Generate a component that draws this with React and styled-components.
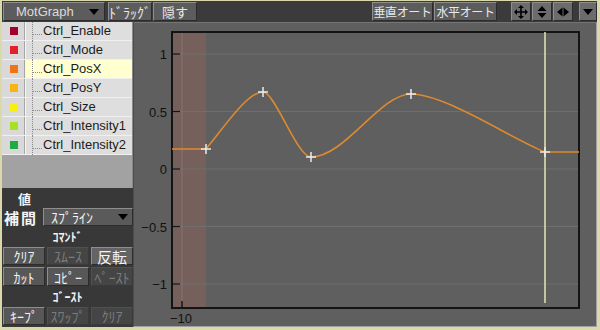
import { createGlobalStyle, styled } from 'styled-components';

const JP = `"Noto Sans CJK JP", "Liberation Sans", sans-serif`;
const SANS = `"Liberation Sans", Arial, sans-serif`;

const GlobalStyle = createGlobalStyle`
	html, body {
		margin: 0;
		padding: 0;
		background: #d9d9a9;
	}
	* {
		box-sizing: border-box;
	}
`;

const channels = [
	{ name: 'Ctrl_Enable', color: '#a3002e' },
	{ name: 'Ctrl_Mode', color: '#e4202a' },
	{ name: 'Ctrl_PosX', color: '#f07412', active: true },
	{ name: 'Ctrl_PosY', color: '#f8b414' },
	{ name: 'Ctrl_Size', color: '#f8ee10' },
	{ name: 'Ctrl_Intensity1', color: '#a8e022' },
	{ name: 'Ctrl_Intensity2', color: '#1eaa44' },
];

const keys = [
	[206, 149],
	[263, 92],
	[311, 157],
	[411, 94],
	[545, 152],
];

const yTicks = [
	{ y: 54, label: '1' },
	{ y: 111.5, label: '0.5' },
	{ y: 169, label: '0' },
	{ y: 226.5, label: '−0.5' },
	{ y: 284, label: '−1' },
];

const curve =
	'M172 149 L206 149 C228 122 248 92 263 92 C275 92 297 157 311 157 C345 157 380 94 411 94 C445 94 510 138 545 152 L579 152';

const MoveIcon = () => (
	<svg width='14' height='14' viewBox='0 0 14 14'>
		<path d='M7 2v10M2 7h10' stroke='#000' strokeWidth='1.6' />
		<path d='M7 0l3 3H4zM7 14l3-3H4zM0 7l3-3v6zM14 7l-3-3v6z' fill='#000' />
	</svg>
);

const UpDownIcon = () => (
	<svg width='10' height='14' viewBox='0 0 10 14'>
		<path d='M5 1l4.5 5h-9zM5 13l4.5-5h-9z' fill='#000' />
	</svg>
);

const LeftRightIcon = () => (
	<svg width='14' height='10' viewBox='0 0 14 10'>
		<path d='M1 5l5.5-4.5v9zM13 5l-5.5-4.5v9z' fill='#000' />
	</svg>
);

const Caret = () => (
	<svg width='10' height='6' viewBox='0 0 10 6'>
		<path d='M0 0h10L5 6z' fill='#000' />
	</svg>
);

const App = () => {
	return (
		<>
			<GlobalStyle />
			<Frame>
				<Toolbar>
					<Drop $w={102}>
						<span>MotGraph</span>
						<Caret />
					</Drop>
					<ToolBtn $w={44} $ml={3} $size={14}>
						ﾄﾞﾗｯｸﾞ
					</ToolBtn>
					<ToolBtn $w={44} $ml={1} $size={13}>
						隠す
					</ToolBtn>
					<ToolBtn $w={61} $ml='auto'>
						垂直オート
					</ToolBtn>
					<ToolBtn $w={63} $ml={1}>
						水平オート
					</ToolBtn>
					<IconBtn $ml={14}>
						<MoveIcon />
					</IconBtn>
					<IconBtn $ml={1}>
						<UpDownIcon />
					</IconBtn>
					<IconBtn $ml={1}>
						<LeftRightIcon />
					</IconBtn>
					<IconBtn $ml={6} $w={18}>
						<Caret />
					</IconBtn>
				</Toolbar>
				<Body>
					<Side>
						<List>
							{channels.map((c) => (
								<Row key={c.name}>
									<SwatchCell>
										<Swatch $color={c.color} />
									</SwatchCell>
									<NameCell $active={c.active}>{c.name}</NameCell>
								</Row>
							))}
						</List>
						<Controls>
							<ValueLabel>値</ValueLabel>
							<InterpRow>
								<InterpLabel>補間</InterpLabel>
								<Select>
									<span>ｽﾌﾟﾗｲﾝ</span>
									<Caret />
								</Select>
							</InterpRow>
							<SectionHead>ｺﾏﾝﾄﾞ</SectionHead>
							<BtnRow>
								<CmdBtn>ｸﾘｱ</CmdBtn>
								<CmdBtn $off>ｽﾑｰｽ</CmdBtn>
								<CmdBtn $strong>反転</CmdBtn>
							</BtnRow>
							<BtnRow>
								<CmdBtn>ｶｯﾄ</CmdBtn>
								<CmdBtn>ｺﾋﾟｰ</CmdBtn>
								<CmdBtn $off>ﾍﾟｰｽﾄ</CmdBtn>
							</BtnRow>
							<SectionHead>ｺﾞｰｽﾄ</SectionHead>
							<BtnRow>
								<CmdBtn>ｷｰﾌﾟ</CmdBtn>
								<CmdBtn $off>ｽﾜｯﾌﾟ</CmdBtn>
								<CmdBtn $off>ｸﾘｱ</CmdBtn>
							</BtnRow>
						</Controls>
					</Side>
					<Graph>
						<svg
							width='100%'
							height='100%'
							viewBox='134 23 462 303'
							preserveAspectRatio='none'
						>
							<rect x='173' y='33' width='33' height='274' fill='#76605b' />
							{yTicks.map((t) => (
								<line
									key={t.label}
									x1='173'
									x2='578'
									y1={t.y}
									y2={t.y}
									stroke='#6f6f6f'
								/>
							))}
							<line x1='182' x2='182' y1='33' y2='307' stroke='#857470' />
							<rect
								x='172'
								y='32'
								width='407'
								height='276'
								fill='none'
								stroke='#141414'
								strokeWidth='2'
							/>
							{yTicks.map((t) => (
								<g key={`t${t.label}`}>
									<line
										x1='172'
										x2='180'
										y1={t.y}
										y2={t.y}
										stroke='#141414'
										strokeWidth='1.2'
									/>
									<text
										x='167'
										y={t.y + 5}
										textAnchor='end'
										fontFamily={SANS}
										fontSize='13'
										fill='#111'
									>
										{t.label}
									</text>
								</g>
							))}
							<line x1='182' x2='182' y1='301' y2='308' stroke='#141414' strokeWidth='1.5' />
							<text
								x='181'
								y='323'
								textAnchor='middle'
								fontFamily={SANS}
								fontSize='13'
								fill='#111'
							>
								−10
							</text>
							<line x1='545' x2='545' y1='32' y2='303' stroke='#dedeb0' strokeWidth='1.6' />
							<path d={curve} fill='none' stroke='#de8a2e' strokeWidth='1.6' />
							{keys.map(([x, y]) => (
								<path
									key={x}
									d={`M${x - 5} ${y}h10M${x} ${y - 5}v10`}
									stroke='#ececec'
									strokeWidth='1.5'
								/>
							))}
						</svg>
					</Graph>
				</Body>
			</Frame>
		</>
	);
};

const Frame = styled.div`
	width: 600px;
	height: 330px;
	padding: 1px 3px 3px 2px;
	display: flex;
	flex-direction: column;
	background: #d9d9a9;
`;

const Toolbar = styled.div`
	height: 21px;
	flex-shrink: 0;
	display: flex;
	align-items: center;
	padding-left: 1px;
	background: #3b3b3b;
`;

const bevel = `
	border: 1px solid;
	border-color: #8e8e8e #2c2c2c #2c2c2c #8e8e8e;
`;

const ToolBtn = styled.div`
	${bevel}
	flex-shrink: 0;
	width: ${(p) => p.$w}px;
	height: 19px;
	margin-left: ${(p) => (p.$ml === 'auto' ? 'auto' : `${p.$ml || 0}px`)};
	display: flex;
	align-items: center;
	justify-content: center;
	background: #5c5c5c;
	color: #e8e8e8;
	font-family: ${JP};
	font-size: ${(p) => p.$size || 12}px;
	letter-spacing: ${(p) => (p.$size ? 0 : -0.4)}px;
	line-height: 1;
	white-space: nowrap;
	overflow: hidden;
`;

const Drop = styled(ToolBtn)`
	justify-content: space-between;
	padding: 0 5px 0 12px;
	font-family: ${SANS};
	font-size: 13px;
	letter-spacing: 0;
	color: #dcdcdc;
`;

const IconBtn = styled(ToolBtn)`
	width: ${(p) => p.$w || 20}px;
	background: #6c6c6c;
`;

const Body = styled.div`
	flex: 1;
	display: flex;
	min-height: 0;
`;

const Side = styled.div`
	width: 131px;
	flex-shrink: 0;
	display: flex;
	flex-direction: column;
	background: #a2a2a2;
`;

const List = styled.div`
	flex: 1;
	display: flex;
	flex-direction: column;
	border-right: 1px solid #8a8a8a;
`;

const Row = styled.div`
	height: 19px;
	display: flex;
	border-bottom: 1px solid #f0f0f0;
`;

const SwatchCell = styled.div`
	width: 23px;
	display: flex;
	align-items: center;
	justify-content: center;
	background: #d9d9d9;
	border-right: 1px solid #a6a6a6;
`;

const Swatch = styled.span`
	width: 8px;
	height: 8px;
	margin-left: 2px;
	background: ${(p) => p.$color};
`;

const NameCell = styled.div`
	flex: 1;
	position: relative;
	padding-left: 17px;
	background: ${(p) => (p.$active ? '#ffffcf' : '#dedede')};
	border-left: 1px solid #f4f4f4;
	color: #1c1c1c;
	font-family: ${SANS};
	font-size: 13px;
	line-height: 18px;
	white-space: nowrap;
	&::before {
		content: '';
		position: absolute;
		left: 6px;
		top: 0;
		bottom: -1px;
		border-left: 1px dotted #8a8a8a;
	}
	&::after {
		content: '';
		position: absolute;
		left: 7px;
		width: 9px;
		top: 12px;
		border-top: 1px dotted #8a8a8a;
	}
`;

const Controls = styled.div`
	height: 139px;
	flex-shrink: 0;
	display: flex;
	flex-direction: column;
	background: #383838;
	color: #f4f4f4;
	font-family: ${JP};
`;

const ValueLabel = styled.div`
	height: 19px;
	padding: 2px 0 0 16px;
	font-size: 13px;
	font-weight: 700;
	line-height: 17px;
`;

const InterpRow = styled.div`
	height: 20px;
	display: grid;
	grid-template-columns: 41px 1fr;
	align-items: center;
`;

const InterpLabel = styled.div`
	font-size: 15px;
	font-weight: 700;
	letter-spacing: 2px;
	padding-left: 2px;
	line-height: 1;
`;

const Select = styled.div`
	${bevel}
	height: 18px;
	display: flex;
	align-items: center;
	justify-content: space-between;
	padding: 0 4px 0 7px;
	background: #5a5a5a;
	font-size: 14px;
	line-height: 1;
`;

const SectionHead = styled.div`
	height: 19px;
	display: flex;
	align-items: center;
	justify-content: center;
	font-size: 12px;
	font-weight: 700;
	line-height: 1;
`;

const BtnRow = styled.div`
	height: 20px;
	display: grid;
	grid-template-columns: repeat(3, 1fr);
	gap: 2px;
	padding: 1px 0 1px 1px;
	& + & {
		height: 21px;
	}
`;

const CmdBtn = styled.div`
	${bevel}
	display: flex;
	align-items: center;
	justify-content: center;
	background: ${(p) => (p.$off ? '#454545' : p.$strong ? '#646464' : '#575757')};
	border-color: ${(p) =>
		p.$off ? '#505050 #3a3a3a #3a3a3a #505050' : '#8e8e8e #2c2c2c #2c2c2c #8e8e8e'};
	color: ${(p) => (p.$off ? '#7c7c7c' : '#f2f2f2')};
	font-size: ${(p) => (p.$strong ? 15 : 14)}px;
	line-height: 1;
	white-space: nowrap;
`;

const Graph = styled.div`
	flex: 1;
	background: #5f5f5f;
	border-top: 1px solid #747474;
	border-left: 1px solid #4c4c4c;
	border-right: 1px solid #a0a0a0;
	border-bottom: 1px solid #a0a0a0;
	svg {
		display: block;
	}
`;

export default App;
